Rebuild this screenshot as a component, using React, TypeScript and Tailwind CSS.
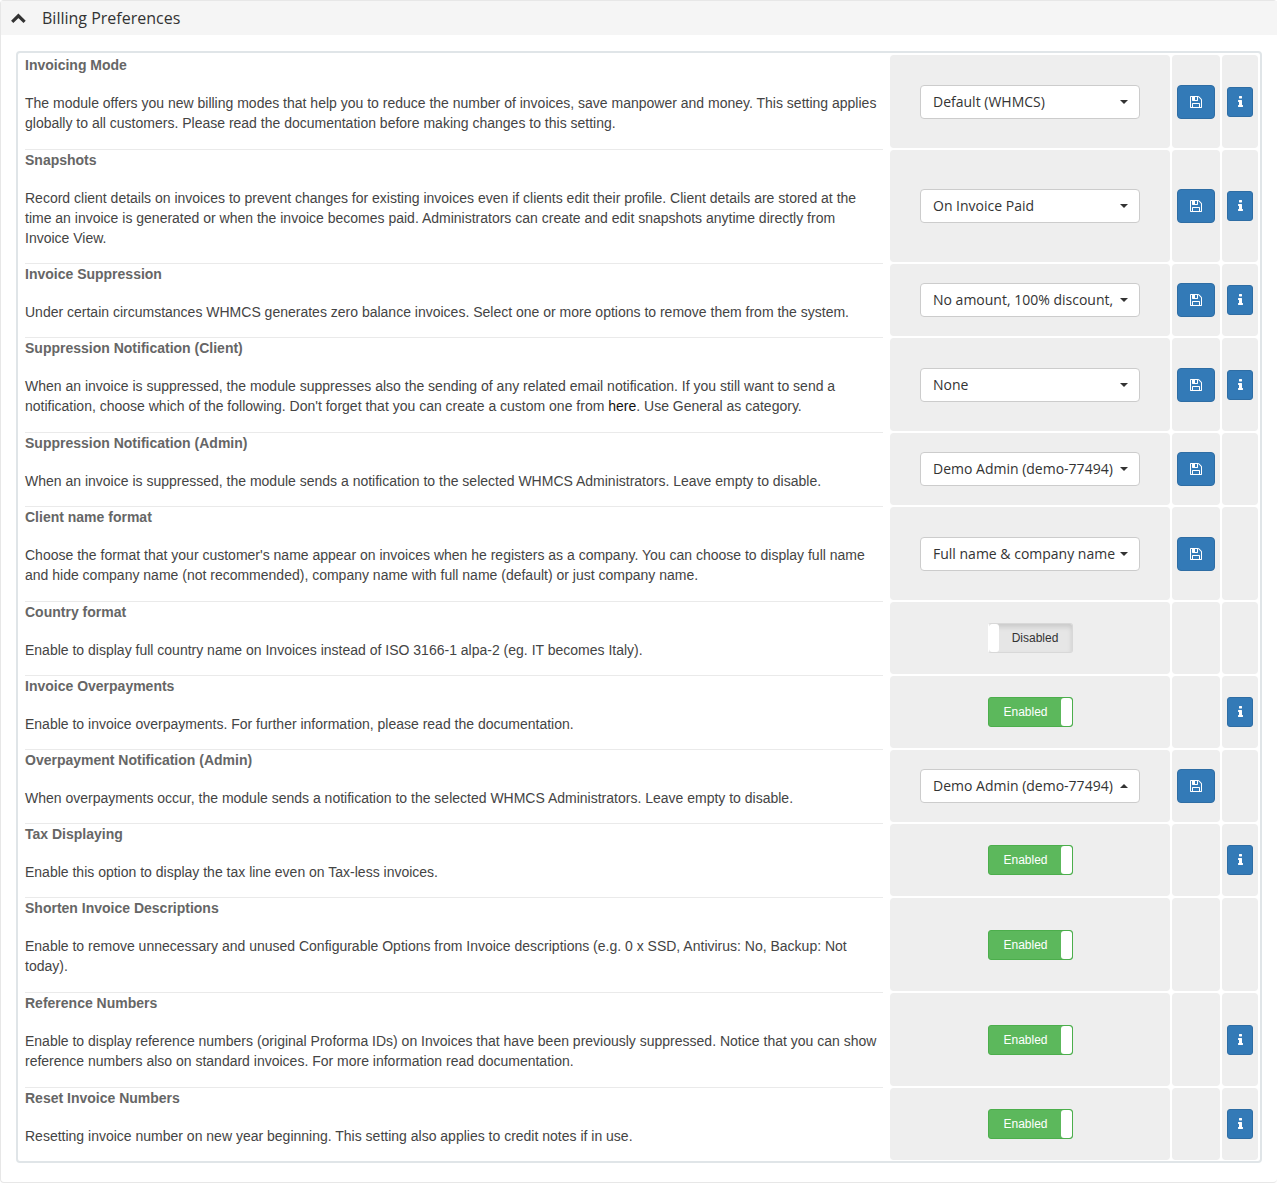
import React, { useState } from 'react';
import clsx from 'clsx';

interface Setting {
  id: string;
  title: string;
  description: React.ReactNode;
  lines: 1 | 2 | 3;
  control: 'select' | 'toggle';
  value?: string;
  enabled?: boolean;
  dropup?: boolean;
  save?: boolean;
  info?: boolean;
}

const settings: Setting[] = [
  {
    id: 'invoicing-mode',
    title: 'Invoicing Mode',
    description:
      'The module offers you new billing modes that help you to reduce the number of invoices, save manpower and money. This setting applies globally to all customers. Please read the documentation before making changes to this setting.',
    lines: 2,
    control: 'select',
    value: 'Default (WHMCS)',
    save: true,
    info: true
  },
  {
    id: 'snapshots',
    title: 'Snapshots',
    description:
      'Record client details on invoices to prevent changes for existing invoices even if clients edit their profile. Client details are stored at the time an invoice is generated or when the invoice becomes paid. Administrators can create and edit snapshots anytime directly from Invoice View.',
    lines: 3,
    control: 'select',
    value: 'On Invoice Paid',
    save: true,
    info: true
  },
  {
    id: 'invoice-suppression',
    title: 'Invoice Suppression',
    description:
      'Under certain circumstances WHMCS generates zero balance invoices. Select one or more options to remove them from the system.',
    lines: 1,
    control: 'select',
    value: 'No amount, 100% discount,',
    save: true,
    info: true
  },
  {
    id: 'suppression-client',
    title: 'Suppression Notification (Client)',
    description: (
      <>
        When an invoice is suppressed, the module suppresses also the sending of any related email notification. If you
        still want to send a notification, choose which of the following. Don't forget that you can create a custom one
        from <a href="#templates" className="text-[#111111]">here</a>. Use General as category.
      </>
    ),
    lines: 2,
    control: 'select',
    value: 'None',
    save: true,
    info: true
  },
  {
    id: 'suppression-admin',
    title: 'Suppression Notification (Admin)',
    description:
      'When an invoice is suppressed, the module sends a notification to the selected WHMCS Administrators. Leave empty to disable.',
    lines: 1,
    control: 'select',
    value: 'Demo Admin (demo-77494)',
    save: true
  },
  {
    id: 'client-name-format',
    title: 'Client name format',
    description:
      "Choose the format that your customer's name appear on invoices when he registers as a company. You can choose to display full name and hide company name (not recommended), company name with full name (default) or just company name.",
    lines: 2,
    control: 'select',
    value: 'Full name & company name',
    save: true
  },
  {
    id: 'country-format',
    title: 'Country format',
    description: 'Enable to display full country name on Invoices instead of ISO 3166-1 alpa-2 (eg. IT becomes Italy).',
    lines: 1,
    control: 'toggle',
    enabled: false
  },
  {
    id: 'invoice-overpayments',
    title: 'Invoice Overpayments',
    description: 'Enable to invoice overpayments. For further information, please read the documentation.',
    lines: 1,
    control: 'toggle',
    enabled: true,
    info: true
  },
  {
    id: 'overpayment-admin',
    title: 'Overpayment Notification (Admin)',
    description:
      'When overpayments occur, the module sends a notification to the selected WHMCS Administrators. Leave empty to disable.',
    lines: 1,
    control: 'select',
    value: 'Demo Admin (demo-77494)',
    dropup: true,
    save: true
  },
  {
    id: 'tax-displaying',
    title: 'Tax Displaying',
    description: 'Enable this option to display the tax line even on Tax-less invoices.',
    lines: 1,
    control: 'toggle',
    enabled: true,
    info: true
  },
  {
    id: 'shorten-descriptions',
    title: 'Shorten Invoice Descriptions',
    description:
      'Enable to remove unnecessary and unused Configurable Options from Invoice descriptions (e.g. 0 x SSD, Antivirus: No, Backup: Not today).',
    lines: 2,
    control: 'toggle',
    enabled: true
  },
  {
    id: 'reference-numbers',
    title: 'Reference Numbers',
    description:
      'Enable to display reference numbers (original Proforma IDs) on Invoices that have been previously suppressed. Notice that you can show reference numbers also on standard invoices. For more information read documentation.',
    lines: 2,
    control: 'toggle',
    enabled: true,
    info: true
  },
  {
    id: 'reset-numbers',
    title: 'Reset Invoice Numbers',
    description: 'Resetting invoice number on new year beginning. This setting also applies to credit notes if in use.',
    lines: 1,
    control: 'toggle',
    enabled: true,
    info: true
  }
];

const rowHeights = {
  1: 'h-[74px]',
  2: 'h-[95px]',
  3: 'h-[114px]'
};

const SaveIcon = () => (
  <svg viewBox="0 0 1536 1792" className="h-3.5 w-3" fill="currentColor" aria-hidden="true">
    <path d="M384 1536h768v-384h-768v384zM1280 1536h128v-896q0-14-10-38.5t-20-34.5l-281-281q-10-10-34-20t-39-10v416q0 40-28 68t-68 28h-576q-40 0-68-28t-28-68v-416h-128v1280h128v-416q0-40 28-68t68-28h832q40 0 68 28t28 68v416zM896 608v-320q0-13-9.5-22.5t-22.5-9.5h-192q-13 0-22.5 9.5t-9.5 22.5v320q0 13 9.5 22.5t22.5 9.5h192q13 0 22.5-9.5t9.5-22.5zM1536 640v928q0 40-28 68t-68 28h-1344q-40 0-68-28t-28-68v-1344q0-40 28-68t68-28h928q40 0 88 20t76 48l280 280q28 28 48 76t20 88z" />
  </svg>
);

const InfoIcon = () => (
  <svg viewBox="0 0 640 1792" className="h-3.5 w-[5px]" fill="currentColor" aria-hidden="true">
    <path d="M640 1344v128q0 26-19 45t-45 19h-512q-26 0-45-19t-19-45v-128q0-26 19-45t45-19h64v-384h-64q-26 0-45-19t-19-45v-128q0-26 19-45t45-19h384q26 0 45 19t19 45v576h64q26 0 45 19t19 45zM512 192v192q0 26-19 45t-45 19h-256q-26 0-45-19t-19-45v-192q0-26 19-45t45-19h256q26 0 45 19t19 45z" />
  </svg>
);

const SelectControl = ({ setting }: { setting: Setting }) => (
  <div className="relative mx-auto w-[220px]">
    <select
      id={setting.id}
      className="block h-[34px] w-full appearance-none rounded border border-[#cccccc] bg-white pl-3 pr-6 font-['Open_Sans',sans-serif] text-sm text-[#333333]"
    >
      <option>{setting.value}</option>
    </select>
    <svg
      viewBox="0 0 8 4"
      className="pointer-events-none absolute right-3 top-[15px] h-1 w-2 text-[#333333]"
      fill="currentColor"
      aria-hidden="true"
    >
      <path d={setting.dropup ? 'M0 4h8L4 0z' : 'M0 0h8L4 4z'} />
    </svg>
  </div>
);

const ToggleControl = ({ setting }: { setting: Setting }) => {
  const [on, setOn] = useState(Boolean(setting.enabled));

  return (
    <button
      id={setting.id}
      type="button"
      role="switch"
      aria-checked={on}
      onClick={() => setOn(!on)}
      className={clsx(
        'mx-auto flex h-[30px] w-[85px] overflow-hidden rounded-[3px] border text-xs',
        on
          ? 'border-[#4cae4c] bg-[#5cb85c] text-white'
          : 'flex-row-reverse border-[#d8d8d8] border-l-white bg-[#e6e6e6] text-[#333333] shadow-[inset_0_3px_5px_rgba(0,0,0,0.125)]'
      )}
    >
      <span className={clsx('flex-1 self-center text-center', on && 'pl-0.5')}>{on ? 'Enabled' : 'Disabled'}</span>
      <span className={clsx('h-full rounded-[3px] bg-white', on ? 'w-[11px]' : 'w-2.5')} />
    </button>
  );
};

const cell = 'rounded-[4px] border border-white bg-[#eeeeee] bg-clip-padding p-0 align-middle';

const SettingRow = ({ setting, first }: { setting: Setting; first: boolean }) => (
  <tr className={rowHeights[setting.lines]}>
    <td className="px-1.5 py-0 align-top">
      <div className={clsx('border-t pb-3.5', first ? 'border-transparent' : 'border-[#eaeaea]')}>
        <label htmlFor={setting.id} className="block font-bold text-[#666666]">
          {setting.title}
        </label>
        <p className="mt-[18px] text-[#444444]">{setting.description}</p>
      </div>
    </td>
    <td className={cell}>
      {setting.control === 'select' ? <SelectControl setting={setting} /> : <ToggleControl setting={setting} />}
    </td>
    <td className={cell}>
      {setting.save && (
        <button
          type="button"
          aria-label={`Save ${setting.title}`}
          className="mx-auto flex h-[34px] w-[38px] items-center justify-center rounded border border-[#2e6da4] bg-[#337ab7] text-white"
        >
          <SaveIcon />
        </button>
      )}
    </td>
    <td className={cell}>
      {setting.info && (
        <button
          type="button"
          aria-label={`About ${setting.title}`}
          className="mx-auto flex h-[30px] w-[26px] items-center justify-center rounded-[3px] border border-[#2e6da4] bg-[#337ab7] text-white"
        >
          <InfoIcon />
        </button>
      )}
    </td>
  </tr>
);

const App: React.FC = () => {
  const [isOpen, setIsOpen] = useState(true);

  return (
    <section className="rounded border-y border-l border-[#e7e7e7] bg-white font-['Liberation_Sans',Arial,sans-serif] text-sm leading-5">
      <h1 className="bg-[#f5f5f5]">
        <button
          type="button"
          aria-expanded={isOpen}
          onClick={() => setIsOpen(!isOpen)}
          className="flex h-[34px] w-full items-center gap-[15px] pl-2.5 text-left font-['Open_Sans',sans-serif] text-base text-[#333333]"
        >
          <svg
            viewBox="0 0 16 12"
            className={clsx('h-3 w-4', !isOpen && 'rotate-180')}
            fill="none"
            stroke="currentColor"
            strokeWidth="3.2"
            aria-hidden="true"
          >
            <path d="M1.2 9.8L7.4 3.8L13.6 9.8" />
          </svg>
          Billing Preferences
        </button>
      </h1>

      {isOpen && (
        <div className="px-[15px] pb-[19px] pt-4">
          <div className="rounded border-2 border-[#e0e5e8] px-px pt-px">
            <table className="w-full table-fixed border-separate border-spacing-0">
              <colgroup>
                <col />
                <col className="w-[282px]" />
                <col className="w-[50px]" />
                <col className="w-[38px]" />
              </colgroup>
              <tbody>
                {settings.map((setting, index) => (
                  <SettingRow key={setting.id} setting={setting} first={index === 0} />
                ))}
              </tbody>
            </table>
          </div>
        </div>
      )}
    </section>
  );
};

export default App;
